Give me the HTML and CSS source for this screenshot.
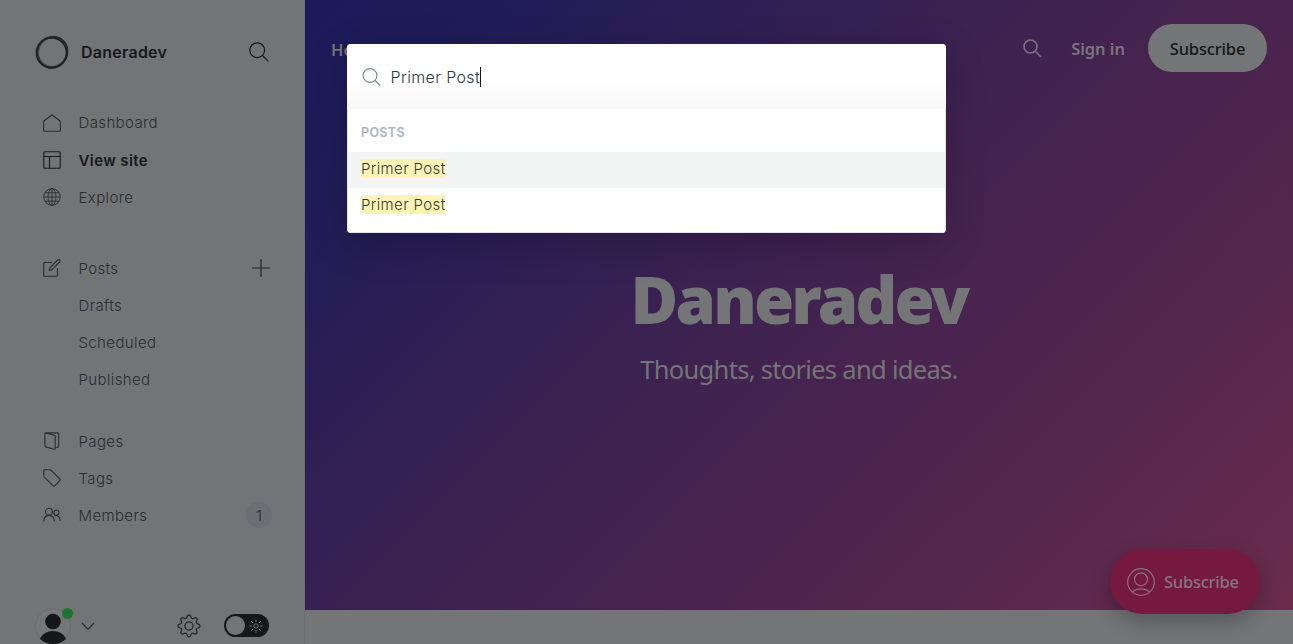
FILE: index.html
```html
<!DOCTYPE html>
<html lang="en">
<head>
<meta charset="utf-8">
<title>Daneradev</title>
<link rel="stylesheet" href="styles.css">
</head>
<body>
<div class="app">
  <aside class="sidebar">
    <header class="brand">
      <svg class="brand-logo" width="36" height="36" viewBox="0 0 36 36" fill="none" stroke="#202226">
        <circle cx="17.6" cy="18.8" r="15" stroke-width="1.9"/>
        <circle cx="18.6" cy="17.6" r="15.2" stroke-width="1.5" opacity=".5"/>
        <ellipse cx="17.9" cy="18.2" rx="15.8" ry="14.4" stroke-width="1.6" opacity=".6" transform="rotate(-45 18 18)"/>
        <ellipse cx="19" cy="18" rx="14.4" ry="15.8" stroke-width="1.5" opacity=".45" transform="rotate(20 18 18)"/>
      </svg>
      <span class="brand-name">Daneradev</span>
      <svg class="brand-search" width="20" height="20" viewBox="0 0 20 20" fill="none" stroke="#17191d" stroke-width="1.25"><circle cx="8.2" cy="8.2" r="7.4"/><path d="M13.5 13.5 19.4 19.4"/></svg>
    </header>
    <nav>
      <ul class="nav-group">
        <li class="nav-item"><svg class="nav-icon" viewBox="0 0 18 18"><path d="M.7 7.3 9 .7l8.3 6.6v9.2a.8.8 0 0 1-.8.8h-15a.8.8 0 0 1-.8-.8z"/></svg><span>Dashboard</span></li>
        <li class="nav-item active"><svg class="nav-icon" viewBox="0 0 18 18"><rect x=".8" y=".8" width="16.4" height="16.4" rx="1"/><path d="M.8 5.5h16.4M6.5 5.5v11.7"/></svg><span>View site</span></li>
        <li class="nav-item"><svg class="nav-icon thin" viewBox="0 0 18 18"><circle cx="9" cy="9" r="8.3"/><ellipse cx="9" cy="9" rx="4" ry="8.3"/><path d="M.7 9h16.6M2 4.8h14M2 13.2h14M9 .7v16.6"/></svg><span>Explore</span></li>
      </ul>
      <ul class="nav-group posts">
        <li class="nav-item"><svg class="nav-icon" viewBox="0 0 18 18"><path d="M9.2 3.5H1.5a.8.8 0 0 0-.8.8v12.2c0 .4.4.8.8.8h12.2c.4 0 .8-.4.8-.8V9.2M7 8.6 14.6 1a1.35 1.35 0 0 1 2 2L9 10.6l-2.7.8z"/></svg><span>Posts</span><svg class="plus" width="18" height="18" viewBox="0 0 18 18" fill="none" stroke="#222429" stroke-width="1.2"><path d="M9 0v18M0 9h18"/></svg></li>
        <li class="nav-item sub">Drafts</li>
        <li class="nav-item sub">Scheduled</li>
        <li class="nav-item sub">Published</li>
      </ul>
      <ul class="nav-group pages">
        <li class="nav-item"><svg class="nav-icon" viewBox="0 0 18 18"><path d="M2.3.9h12.3c.7 0 1.1.4 1.1 1.1v12.2c0 .7-.4 1-1.1 1h-2M2.3.9l9 2.3c.6.2.9.5.9 1.1v12.1c0 .7-.4 1-1.1.8l-8.3-2.3c-.6-.2-.9-.5-.9-1.1V1.5c0-.4.1-.6.4-.6z"/></svg><span>Pages</span></li>
        <li class="nav-item"><svg class="nav-icon" viewBox="0 0 18 18"><path d="M1.5.8H7c.5 0 .9.2 1.2.5l8.7 8.7c.5.5.5.9 0 1.4l-5.3 5.4c-.5.5-.9.5-1.4 0L1.3 8.1A1.8 1.8 0 0 1 .8 7V1.5c0-.5.2-.7.7-.7z"/></svg><span>Tags</span></li>
        <li class="nav-item"><svg class="nav-icon" viewBox="0 0 18 18"><circle cx="6" cy="5.7" r="3.4"/><path d="M.7 15.5c0-3.5 2-6.1 5.3-6.1s5.3 2.6 5.3 6.1"/><circle cx="13.4" cy="6.6" r="2.6"/><path d="M11.7 9.6c3.2-.8 5.5 1.6 5.6 5.4"/></svg><span>Members</span><b class="count">1</b></li>
      </ul>
    </nav>
    <footer class="account">
      <span class="avatar"><svg width="36" height="36" viewBox="0 0 36 36"><circle cx="18" cy="18" r="17.5" fill="#757678" stroke="#6b6d6f"/><circle cx="18" cy="13.5" r="7.8" fill="#15171a"/><path d="M5 31c2-5 7-8 13-8s11 3 13 8c-3 3-8 5-13 5S8 34 5 31z" fill="#15171a"/></svg><i class="status"></i></span>
      <svg class="chevron" width="14" height="9" viewBox="0 0 14 9" fill="none" stroke="#2b2d31" stroke-width="1.2"><path d="m1 1 6 6.4L13 1"/></svg>
      <svg class="gear" width="24" height="24" viewBox="0 0 24 24" fill="none" stroke="#26282c" stroke-width="1.3" stroke-linejoin="round"><circle cx="12" cy="12" r="4.1"/><path d="M10.3 2.2c.5-1.6 2.9-1.6 3.4 0l.4 1.2c.3 1 1.4 1.5 2.4 1l1.1-.5c1.5-.8 3.2.9 2.4 2.4l-.5 1.1c-.5 1 0 2.1 1 2.4l1.2.4c1.6.5 1.6 2.9 0 3.4l-1.2.4c-1 .3-1.5 1.4-1 2.4l.5 1.1c.8 1.5-.9 3.2-2.4 2.4l-1.1-.5c-1-.5-2.1 0-2.4 1l-.4 1.2c-.5 1.6-2.9 1.6-3.4 0l-.4-1.2c-.3-1-1.4-1.5-2.4-1l-1.1.5c-1.5.8-3.2-.9-2.4-2.4l.5-1.1c.5-1 0-2.1-1-2.4l-1.2-.4c-1.6-.5-1.6-2.9 0-3.4l1.2-.4c1-.3 1.5-1.4 1-2.4l-.5-1.1c-.8-1.5.9-3.2 2.4-2.4l1.1.5c1 .5 2.1 0 2.4-1z"/></svg>
      <span class="toggle"><i class="knob"></i><svg width="14" height="14" viewBox="0 0 14 14" fill="none" stroke="#77797b" stroke-width="1"><circle cx="7" cy="7" r="2.2"/><path d="M7 .4v2.5M7 11.1v2.5M.4 7h2.5M11.1 7h2.5M2.3 2.3l1.8 1.8M9.9 9.9l1.8 1.8M2.3 11.7l1.8-1.8M9.9 4.1l1.8-1.8"/></svg></span>
    </footer>
  </aside>
  <main class="site">
    <section class="hero">
      <header class="site-nav">
        <span class="link">Home</span><span class="link about">About</span>
        <svg class="site-search" width="19" height="19" viewBox="0 0 19 19" fill="none" stroke="#7d707f" stroke-width="1.6"><circle cx="7.5" cy="7.5" r="6.5"/><path d="m12.2 12.2 5.8 5.8"/></svg>
        <span class="signin">Sign in</span>
        <span class="subscribe">Subscribe</span>
      </header>
      <h1>Daneradev</h1>
      <p>Thoughts, stories and ideas.</p>
    </section>
  </main>
  <div class="portal">
    <svg width="28" height="28" viewBox="0 0 28 28" fill="none" stroke="#857480" stroke-width="1.2"><circle cx="14" cy="14" r="13.3"/><circle cx="14" cy="11.3" r="6.5"/><path d="M5.3 24c2.200-2.100 5.100-3.200 8.700-3.200s6.500 1.100 8.700 3.200"/></svg>
    <span>Subscribe</span>
  </div>
  <div class="search-modal">
    <div class="search-field">
      <svg width="19" height="18" viewBox="0 0 19 18" fill="none" stroke="#7c8b9a" stroke-width="1.2"><circle cx="8" cy="7.5" r="6.9"/><path d="m13 12.5 5.3 5"/></svg>
      <span class="query">Primer Post</span><i class="caret"></i>
    </div>
    <div class="results">
      <div class="group-title">POSTS</div>
      <div class="result selected"><mark>Primer Post</mark></div>
      <div class="result"><mark>Primer Post</mark></div>
    </div>
  </div>
</div>
</body>
</html>
```
FILE: styles.css
```css
* { box-sizing: border-box; }
body { margin: 0; font-family: Inter, "Liberation Sans", sans-serif; }
svg { display: block; flex: none; }
.app { position: relative; display: flex; width: 1293px; height: 644px; overflow: hidden; background: #737577; }
.sidebar { width: 305px; height: 644px; display: flex; flex-direction: column; border-right: 1px solid #6b6e71; background: #737476; }
.brand { display: flex; align-items: center; height: 36px; margin: 34px 35.5px 0 34px; }
.brand-name { margin-left: 11px; font-size: 16px; font-weight: 600; letter-spacing: .25px; color: #17191d; }
.brand-search { margin-left: auto; }
.nav-group { list-style: none; margin: 34px 0 0; padding: 0 33px 0 42.5px; }
.nav-group.posts { margin-top: 33.5px; }
.nav-group.pages { margin-top: 24.2px; }
.nav-item { display: flex; align-items: center; height: 37.3px; font-size: 15px; font-weight: 350; letter-spacing: .38px; color: #2b2d33; }
.nav-group.pages .nav-item { height: 37px; }
.nav-item.active { padding-top: 1px; font-weight: 600; letter-spacing: .4px; color: #17191d; }
.nav-item.sub { padding-left: 36px; }
.nav-icon { width: 18px; height: 18px; margin-right: 18px; fill: none; stroke: #2b2d33; stroke-width: 1.1; stroke-linejoin: round; }
.nav-icon.thin { stroke-width: .9; }
.active .nav-icon { stroke: #17191d; }
.plus { margin-left: auto; margin-right: 1.5px; }
.count { display: flex; align-items: center; justify-content: center; width: 26px; height: 26px; margin-left: auto; margin-right: -1px; border-radius: 50%; background: #6d6e73; font-size: 14px; font-weight: 400; color: #30343c; letter-spacing: 0; }
.account { display: flex; align-items: center; height: 36px; margin-top: auto; padding-left: 35px; }
.avatar { position: relative; width: 36px; height: 36px; }
.status { position: absolute; right: -2px; top: 0; width: 11px; height: 11px; border-radius: 50%; background: #1f7431; }
.chevron { margin-left: 10px; }
.gear { margin: -1px 0 0 82px; }
.toggle { display: flex; align-items: center; justify-content: space-between; width: 45px; height: 23px; margin: -1px 0 0 23px; padding: 0 6px 0 2px; border-radius: 12px; background: #15171a; }
.knob { width: 19px; height: 19px; border-radius: 50%; background: #737476; }
.site { flex: 1; font-family: "Noto Sans", "Open Sans", sans-serif; }
.hero { height: 610px; overflow: hidden; background: linear-gradient(135deg, #1c1b59 0%, #1f1c58 12%, #41234f 50%, #54264e 76%, #6b2c4d 100%); text-align: center; color: #737577; }
.site-nav { display: flex; align-items: center; height: 48px; margin: 24px 26px 0; }
.link, .signin { font-size: 16.5px; font-weight: 600; color: #7c7280; }
.link { padding-top: 2px; color: #737477; }
.about { margin-left: 31px; }
.site-search { margin-left: auto; }
.signin { width: 54px; margin-left: 29px; padding-top: 1px; white-space: nowrap; letter-spacing: -.05px; }
.subscribe { display: flex; align-items: center; justify-content: center; width: 119px; height: 48px; margin-left: 23px; padding-top: 1px; border-radius: 24px; background: #737577; font-size: 16.5px; font-weight: 500; letter-spacing: -.15px; color: #15171a; }
h1 { margin: 183px 0 0; font-size: 65px; line-height: 88px; font-weight: 900; letter-spacing: -2.8px; }
p { margin: 5px 0 0; font-size: 25.5px; line-height: 42px; letter-spacing: -.7px; }
.portal { position: absolute; left: 1110px; top: 549px; display: flex; align-items: center; width: 150px; height: 65px; padding-left: 17px; border-radius: 33px; background: #751a3e; box-shadow: 0 8px 20px rgba(0,0,0,.25); font: 500 16.5px "Noto Sans", sans-serif; letter-spacing: -.25px; color: #857480; }
.portal span { margin-left: 9px; }
.search-modal { position: absolute; left: 347px; top: 44px; width: 599px; height: 189px; border-radius: 4px; overflow: hidden; background: #fff; box-shadow: 0 10px 40px rgba(0,0,0,.2); }
.search-field { display: flex; align-items: center; height: 65px; padding: 1px 0 0 15px; background: linear-gradient(#fff 55%, #f8f8f8); }
.query { margin-left: 9.5px; font-size: 16px; font-weight: 350; letter-spacing: .35px; color: #303840; }
.caret { width: 1px; height: 20px; background: #15171a; }
.results { height: 124px; padding-top: 5px; border: solid #e3e4e8; border-width: 0 1px 1px; border-radius: 0 0 4px 4px; }
.group-title { height: 38px; padding-left: 13px; line-height: 37px; font-size: 12.5px; font-weight: 600; letter-spacing: .35px; color: #abb4be; }
.result { height: 36px; padding-left: 13px; line-height: 34px; font-size: 15px; font-weight: 350; letter-spacing: .38px; }
.result.selected { background: #f3f5f5; }
mark { display: inline-block; height: 19px; line-height: 19px; border-radius: 1px; background: #fff4b5; color: #343a36; }
```
